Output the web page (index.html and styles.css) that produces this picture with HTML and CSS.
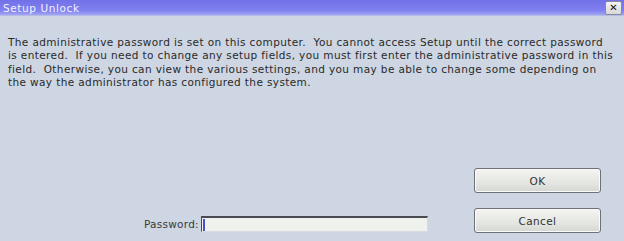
FILE: index.html
```html
<!DOCTYPE html>
<html>
<head>
<meta charset="utf-8">
<link rel="stylesheet" href="styles.css">
</head>
<body>
<div class="dialog">
  <div class="titlebar">
    <span class="title">Setup Unlock</span>
    <span class="close">&#x2715;</span>
  </div>
  <div class="content">
    <p class="msg">The administrative password is set on this computer.&nbsp; You cannot access Setup until the correct password<br>is entered.&nbsp; If you need to change any setup fields, you must first enter the administrative password in this<br>field.&nbsp; Otherwise, you can view the various settings, and you may be able to change some depending on<br>the way the administrator has configured the system.</p>
    <div class="bottom">
      <div class="pw">
        <span class="label">Password:</span>
        <span class="input"><span class="caret"></span></span>
      </div>
      <div class="buttons">
        <span class="btn">OK</span>
        <span class="btn">Cancel</span>
      </div>
    </div>
  </div>
</div>
</body>
</html>
```

FILE: styles.css
```css
html, body {
  margin: 0;
  padding: 0;
}
body {
  width: 624px;
  height: 241px;
  overflow: hidden;
  background: #cdd6e2;
  font-family: "DejaVu Sans", sans-serif;
}
.dialog {
  display: flex;
  flex-direction: column;
  height: 241px;
}
.titlebar {
  height: 16px;
  box-sizing: border-box;
  background: linear-gradient(#7272e8, #8080f0 70%, #a3a6f2);
  border-bottom: 1px solid #b6bce8;
  display: flex;
  align-items: center;
  justify-content: space-between;
  padding: 0 2px 0 3px;
}
.title {
  color: #f2f2ff;
  font-size: 10.5px;
  letter-spacing: 0.6px;
}
.close {
  width: 17px;
  height: 14px;
  box-sizing: border-box;
  background: linear-gradient(#f4f4f4, #d8d8d8);
  border: 1px solid #8a8a9a;
  border-radius: 2px;
  font-size: 10px;
  font-weight: bold;
  line-height: 12px;
  text-align: center;
  color: #111;
  margin-top: 1px;
}
.content {
  flex: 1;
  display: flex;
  flex-direction: column;
  padding: 0 23px 8px 8px;
}
.msg {
  margin: 20px 0 0 0;
  font-size: 10.5px;
  line-height: 13.3px;
  color: #2a2a2a;
  letter-spacing: 0.38px;
  white-space: nowrap;
}
.bottom {
  flex: 1;
  display: flex;
  justify-content: space-between;
  align-items: flex-end;
}
.pw {
  display: flex;
  align-items: center;
  margin-left: 136px;
  margin-bottom: 1px;
}
.label {
  font-size: 10.5px;
  letter-spacing: 0.25px;
  color: #3a3a3a;
  margin-right: 2px;
}
.input {
  width: 227px;
  height: 16px;
  box-sizing: border-box;
  background: #eef1ec;
  border-top: 2px solid #4a4a52;
  border-left: 1px solid #4a4a52;
  border-right: 1px solid #d6dbe0;
  border-bottom: 1px solid #d6dbe0;
  display: flex;
  align-items: center;
  padding-left: 1px;
}
.caret {
  width: 2px;
  height: 12px;
  background: #5050c8;
}
.buttons {
  display: flex;
  flex-direction: column;
  gap: 15px;
}
.btn {
  width: 127px;
  height: 25px;
  box-sizing: border-box;
  border: 1px solid #6e7078;
  border-radius: 3px;
  background: linear-gradient(#f4f5f2, #e4e6e1 60%, #d5d8d2);
  box-shadow: inset 0 0 0 1px #fafafa;
  font-size: 10.5px;
  letter-spacing: 0.38px;
  color: #333;
  display: flex;
  align-items: center;
  justify-content: center;
}
```
